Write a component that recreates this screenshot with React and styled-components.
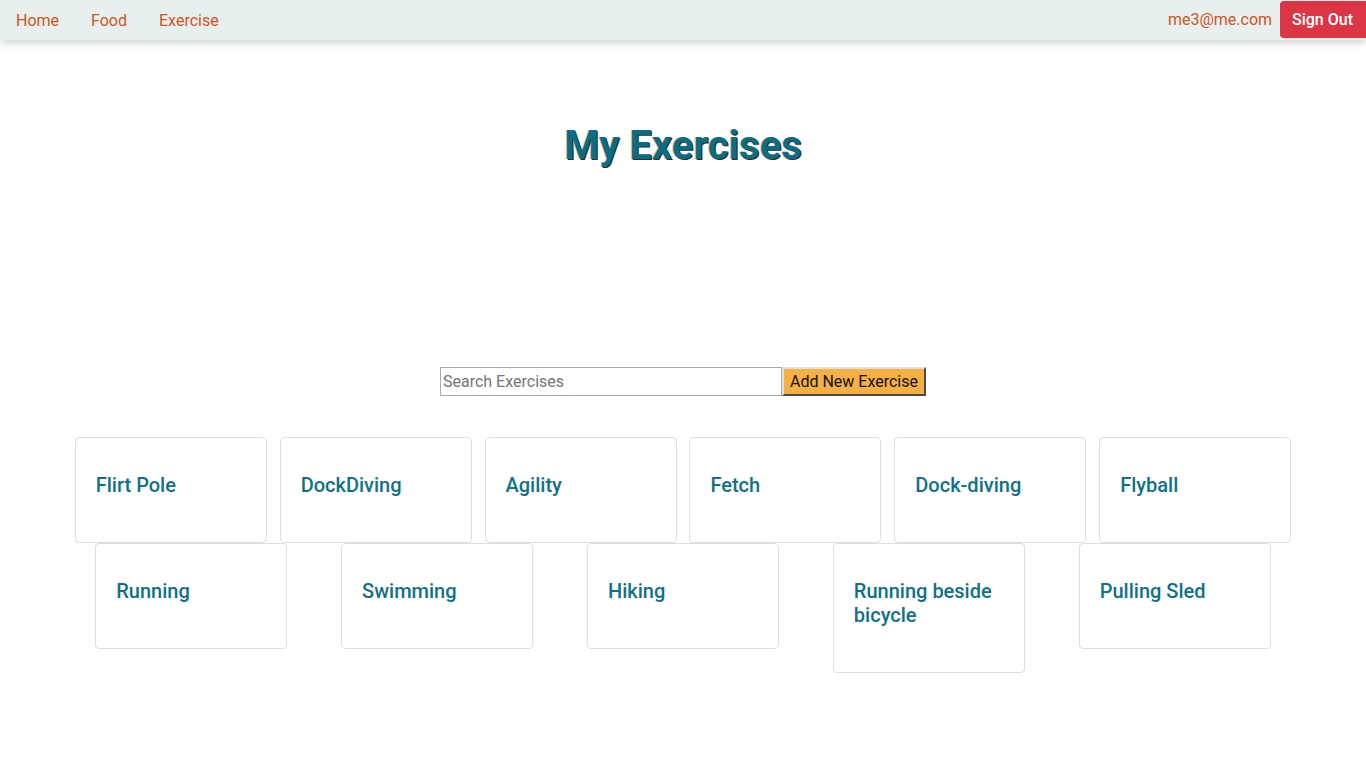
import React from "react";
import styled, { createGlobalStyle } from "styled-components";

const Global = createGlobalStyle`
  body {
    margin: 0;
    font-family: Roboto, "Liberation Sans", Arial, sans-serif;
    background: #fff;
  }
`;

const Nav = styled.nav`
  display: flex;
  align-items: center;
  height: 40px;
  background: #e7f0ee;
  box-shadow: 0 3px 8px rgba(0, 0, 0, 0.18);
`;

const NavLink = styled.a`
  padding: 0 16px;
  font-size: 16px;
  color: #d0541c;
  text-decoration: none;
  cursor: pointer;
`;

const Spacer = styled.div`
  flex: 1;
`;

const Email = styled.span`
  font-size: 16px;
  color: #d0541c;
  margin-right: 8px;
  margin-top: -2px;
`;

const SignOut = styled.button`
  align-self: flex-start;
  margin-top: 1px;
  height: 37px;
  padding: 0 13px 0 12px;
  border: none;
  border-radius: 4px 0 0 4px;
  background: #dc3545;
  color: #fff;
  font-family: inherit;
  font-size: 16px;
  font-weight: 500;
`;

const Title = styled.h1`
  margin: 82px 0 0;
  text-align: center;
  font-size: 40px;
  font-weight: 700;
  line-height: 47px;
  color: #0b6c82;
  text-shadow: 1px 1px 0 #2b2b2b, -1px 0 0 rgba(210, 120, 40, 0.35);
`;

const SearchRow = styled.div`
  display: flex;
  justify-content: center;
  margin-top: 198px;
`;

const SearchInput = styled.input`
  box-sizing: border-box;
  width: 342px;
  height: 29px;
  padding: 0 2px;
  border: 1px solid #a9a9a9;
  font-family: inherit;
  font-size: 16px;
  color: #333;
  &::placeholder {
    color: #757575;
  }
`;

const AddButton = styled.button`
  box-sizing: border-box;
  height: 29px;
  padding: 0 6px;
  background: #f4b042;
  border: 2px outset #a0a0a0;
  border-top-color: #e0e0e0;
  border-left-color: #e0e0e0;
  font-family: inherit;
  font-size: 16px;
  color: #111;
`;

const CardGrid = styled.div`
  width: 90%;
  margin: 41px auto 0;
  display: flex;
  flex-wrap: wrap;
  justify-content: space-around;
  align-items: flex-start;
`;

const Card = styled.div`
  box-sizing: border-box;
  width: 192px;
  margin: 0 6.4px;
  padding: 0 20px;
  border: 1px solid #dedede;
  border-radius: 4px;
  background: #fff;
`;

const CardTitle = styled.h3`
  margin: 0;
  padding: 35px 0 45px;
  font-size: 20px;
  font-weight: 500;
  line-height: 24px;
  color: #0e7286;
`;

const exercises = [
  "Flirt Pole",
  "DockDiving",
  "Agility",
  "Fetch",
  "Dock-diving",
  "Flyball",
  "Running",
  "Swimming",
  "Hiking",
  "Running beside bicycle",
  "Pulling Sled",
];

export default function App() {
  return (
    <>
      <Global />
      <Nav>
        <NavLink>Home</NavLink>
        <NavLink>Food</NavLink>
        <NavLink>Exercise</NavLink>
        <Spacer />
        <Email>me3@me.com</Email>
        <SignOut>Sign Out</SignOut>
      </Nav>
      <Title>My Exercises</Title>
      <SearchRow>
        <SearchInput placeholder="Search Exercises" />
        <AddButton>Add New Exercise</AddButton>
      </SearchRow>
      <CardGrid>
        {exercises.map((name) => (
          <Card key={name}>
            <CardTitle>{name}</CardTitle>
          </Card>
        ))}
      </CardGrid>
    </>
  );
}
